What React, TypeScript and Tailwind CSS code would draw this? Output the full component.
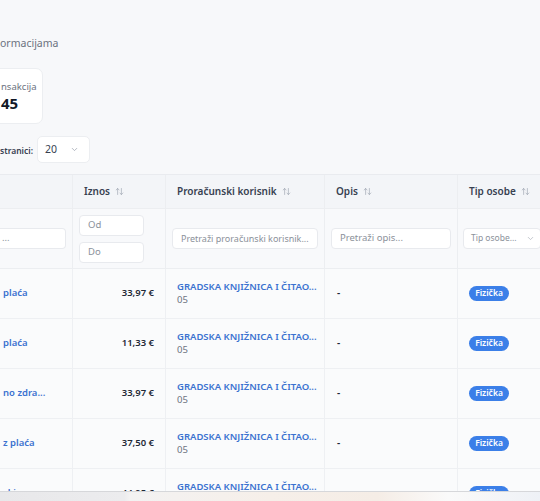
import { ArrowUpDown, ChevronDown } from "lucide-react";

type Row = { name: string; amount: string };

const rows: Row[] = [
  { name: "plaća", amount: "33,97 €" },
  { name: "plaća", amount: "11,33 €" },
  { name: "no zdra...", amount: "33,97 €" },
  { name: "z plaća", amount: "37,50 €" },
  { name: "ski", amount: "44,95 €" },
];

function SortHead({ label }: { label: string }) {
  return (
    <div className="flex items-center gap-[5px] text-[10px] font-semibold text-[#374151]">
      {label}
      <ArrowUpDown className="h-[9px] w-[9px] text-[#9ca3af]" strokeWidth={1.75} />
    </div>
  );
}

function FilterBox({ text, className }: { text: string; className: string }) {
  return (
    <div
      className={`flex items-center overflow-hidden whitespace-nowrap rounded-[4px] border border-[#e8eaee] bg-white px-[8px] text-[9.5px] text-[#8b919a] ${className}`}
    >
      {text}
    </div>
  );
}

export default function App() {
  return (
    <div className="relative h-[501px] w-[540px] overflow-hidden bg-[#f7f8fa] font-['Noto_Sans',sans-serif]">
      <div className="pt-[36px] text-[10.5px] leading-[14px] text-[#6b7280]">ormacijama</div>

      <div className="-ml-[10px] mt-[18px] flex h-[56px] w-[53px] flex-col justify-center rounded-[7px] border border-[#eceef1] bg-white pl-[10px]">
        <span className="text-[9.5px] leading-[13px] text-[#6b7280]">nsakcija</span>
        <span className="text-[15px] font-bold leading-[20px] text-[#111827]">45</span>
      </div>

      <div className="mt-[12px] flex items-center gap-[4px]">
        <span className="mt-[3px] text-[8.5px] font-semibold text-[#374151]">stranici:</span>
        <div className="flex h-[27px] w-[53px] items-center justify-between rounded-[5px] border border-[#eceef1] bg-white pl-[7px] pr-[10px] text-[10.5px] text-[#374151]">
          20
          <ChevronDown className="h-[9px] w-[9px] text-[#9ca3af]" />
        </div>
      </div>

      <div className="mt-[11px] w-[640px] border-t border-[#e9ebef]">
        <div className="grid grid-cols-[73px_93px_159px_133px_182px]">
          {/* header */}
          <div className="h-[34px] border-b border-r border-[#eceef1] bg-[#f3f5f8]" />
          <div className="flex h-[34px] items-center border-b border-r border-[#eceef1] bg-[#f3f5f8] pl-[11px]">
            <SortHead label="Iznos" />
          </div>
          <div className="flex h-[34px] items-center border-b border-r border-[#eceef1] bg-[#f3f5f8] pl-[11px]">
            <SortHead label="Proračunski korisnik" />
          </div>
          <div className="flex h-[34px] items-center border-b border-r border-[#eceef1] bg-[#f3f5f8] pl-[11px]">
            <SortHead label="Opis" />
          </div>
          <div className="flex h-[34px] items-center border-b border-[#eceef1] bg-[#f3f5f8] pl-[11px]">
            <SortHead label="Tip osobe" />
          </div>

          {/* filters */}
          <div className="flex h-[60px] items-center border-b border-r border-[#eceef1] bg-[#f8f9fb] pr-[6px]">
            <FilterBox text="..." className="h-[21px] w-full rounded-l-none border-l-0 pl-[2px]" />
          </div>
          <div className="flex h-[60px] flex-col justify-center gap-[6px] border-b border-r border-[#eceef1] bg-[#f8f9fb] pl-[6px]">
            <FilterBox text="Od" className="h-[21px] w-[65px]" />
            <FilterBox text="Do" className="h-[21px] w-[65px]" />
          </div>
          <div className="flex h-[60px] items-center border-b border-r border-[#eceef1] bg-[#f8f9fb] px-[6px]">
            <FilterBox text="Pretraži proračunski korisnik..." className="h-[21px] w-full px-[6px] text-[9px]" />
          </div>
          <div className="flex h-[60px] items-center border-b border-r border-[#eceef1] bg-[#f8f9fb] px-[6px]">
            <FilterBox text="Pretraži opis..." className="h-[21px] w-full" />
          </div>
          <div className="flex h-[60px] items-center border-b border-[#eceef1] bg-[#f8f9fb] pl-[5px]">
            <div className="flex h-[21px] w-[78px] items-center justify-between whitespace-nowrap rounded-[4px] border border-[#e8eaee] bg-white pl-[7px] pr-[5px] text-[8.5px] text-[#8b919a]">
              Tip osobe...
              <ChevronDown className="h-[9px] w-[9px] text-[#b0b5bd]" />
            </div>
          </div>

          {/* rows */}
          {rows.map((r, i) => (
            <div key={i} className="contents">
              <div className="flex h-[50px] items-center border-b border-r border-[#eef0f3] bg-[#fafbfc] pl-[3px] text-[9.5px] font-semibold text-[#3a72d0]">
                {r.name}
              </div>
              <div className="flex h-[50px] items-center justify-end border-b border-r border-[#eef0f3] bg-[#fafbfc] pr-[11px] text-[9.5px] font-semibold text-[#1f2937]">
                {r.amount}
              </div>
              <div className="flex h-[50px] flex-col justify-center border-b border-r border-[#eef0f3] bg-[#fafbfc] pl-[11px]">
                <span className="whitespace-nowrap text-[9.5px] font-semibold leading-[13px] text-[#3a72d0]">
                  GRADSKA KNJIŽNICA I ČITAO...
                </span>
                <span className="text-[9.5px] leading-[14px] text-[#6b7280]">05</span>
              </div>
              <div className="flex h-[50px] items-center border-b border-r border-[#eef0f3] bg-[#fafbfc] pl-[12px] text-[10px] font-semibold text-[#1f2937]">
                -
              </div>
              <div className="flex h-[50px] items-center border-b border-[#eef0f3] bg-[#fafbfc] pl-[11px]">
                <span className="flex h-[15px] w-[40px] items-center justify-center rounded-full bg-[#3b7fe8] text-[8.5px] font-semibold text-white">
                  Fizička
                </span>
              </div>
            </div>
          ))}
        </div>
      </div>

      {/* blurred overlay strip at the bottom */}
      <div className="absolute bottom-0 left-0 h-[10px] w-full border-t border-[#d6d7da] bg-[linear-gradient(90deg,#e8e8ea_0%,#ececee_23%,#f3f2f2_24%,#f6efe9_50%,#f5ede6_70%,#fafafa_83%,#f7f7f8_88%,#eef1f6_100%)]" />
    </div>
  );
}
